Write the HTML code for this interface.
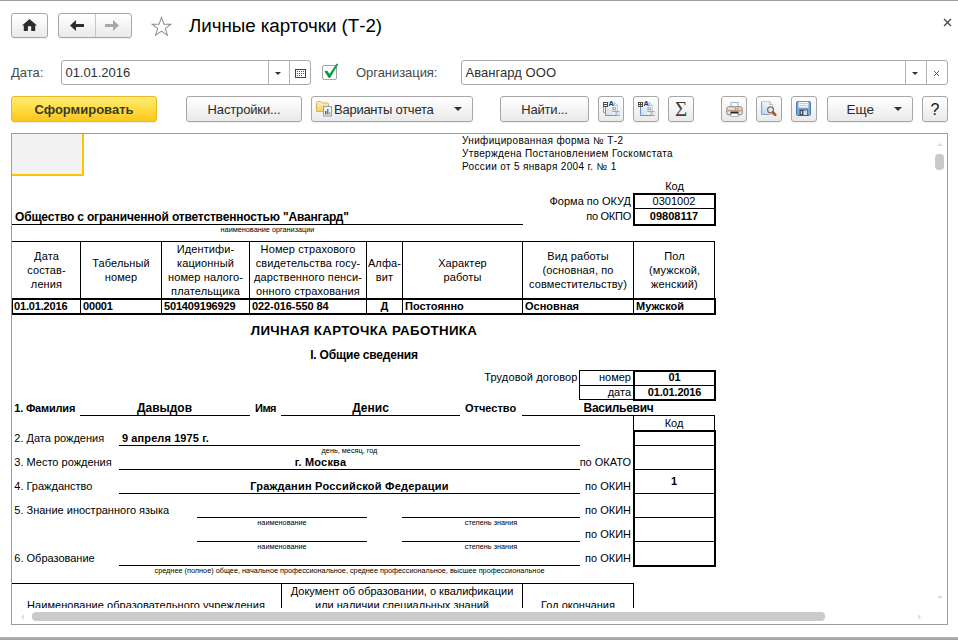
<!DOCTYPE html>
<html lang="ru">
<head>
<meta charset="utf-8">
<title>Личные карточки (Т-2)</title>
<style>
*{box-sizing:border-box;margin:0;padding:0}
html,body{width:958px;height:640px;overflow:hidden;background:#fff}
body{position:relative;font-family:"Liberation Sans",Arial,sans-serif;font-size:13px;color:#333}
.abs{position:absolute}
.topline{left:0;top:0;width:958px;height:1px;background:#9e9e9e}
.botbar{left:0;top:637px;width:958px;height:3px;background:linear-gradient(#bcbcbc,#a8a8a8 50%,#a0a0a0)}
.btn{position:absolute;height:26px;top:96px;border:1px solid #a6a6a6;border-radius:3px;background:linear-gradient(#ffffff,#f6f6f6 45%,#e9e9e9);box-shadow:0 1px 0 rgba(0,0,0,.06);font-size:13px;color:#2a2a2a;line-height:26px;text-align:center;white-space:nowrap}
.btn.nav{top:13px;height:25px;line-height:23px}
.ybtn{background:linear-gradient(#ffec78,#ffdf45 45%,#fcc71c);border-color:#eeb51f;font-weight:bold;color:#3a3a26;line-height:26px}
.inp{position:absolute;top:60px;height:25px;border:1px solid #a9a9a9;border-radius:3px;background:#fff}
.inp .txt{position:absolute;left:4px;top:0;line-height:23px;font-size:13px;color:#303030;letter-spacing:-0.1px;white-space:nowrap}
.inp .sep{position:absolute;top:0;width:1px;height:23px;background:#b5b5b5}
.lbl{position:absolute;font-size:13px;line-height:15px;color:#484848;white-space:nowrap}
.tri{position:absolute;width:0;height:0;border-left:4px solid transparent;border-right:4px solid transparent;border-top:4px solid #333}
/* report */
#frame{position:absolute;left:11px;top:133px;width:937px;height:492px;border:1px solid #9d9d9d;background:#fff;overflow:hidden}
#docwrap{position:absolute;left:0;top:0;width:921px;height:474px;overflow:hidden}
#doc{position:absolute;left:-12px;top:-134px;width:958px;height:640px;font-size:11px;color:#000}
#doc div{position:absolute;white-space:nowrap}
.h{height:1px;background:#000}
.v{width:1px;background:#000}
.t{line-height:13px}
.b{font-weight:bold}
.c{text-align:center}
.r{text-align:right}
.tiny{font-size:7.3px;line-height:9px;color:#000}
</style>
</head>
<body>
<div class="abs topline"></div>

<!-- navigation -->
<div class="btn nav" style="left:11px;width:37px"><svg width="15" height="12" viewBox="0 0 15 12" style="position:absolute;left:10px;top:5px"><path d="M7.5 0 L15 6.6 H13.2 V12 H9.2 V7.2 H5.9 V12 H1.8 V6.6 H0 Z" fill="#2e2e2e"/></svg></div>
<div class="btn nav" style="left:58px;width:74px"><div class="abs" style="left:36px;top:0;width:1px;height:23px;background:#c6c6c6"></div>
<svg width="14" height="11" viewBox="0 0 14 11" style="position:absolute;left:11px;top:6px"><path d="M6 0 L0 5.5 L6 11 V7 H14 V4 H6 Z" fill="#2e2e2e"/></svg>
<svg width="14" height="11" viewBox="0 0 14 11" style="position:absolute;left:46px;top:6px"><path d="M8 0 L14 5.5 L8 11 V7 H0 V4 H8 Z" fill="#a8a8a8"/></svg></div>
<svg class="abs" style="left:150px;top:16px" width="23" height="21" viewBox="0 0 24 23"><path d="M12 1.5 L14.7 9 H22.3 L16.2 13.6 L18.5 21.2 L12 16.6 L5.5 21.2 L7.8 13.6 L1.7 9 H9.3 Z" fill="#fff" stroke="#8c8c8c" stroke-width="1.1" stroke-linejoin="miter"/></svg>
<div class="abs" style="left:189px;top:14px;font-size:18.8px;line-height:24px;color:#000;white-space:nowrap;letter-spacing:-0.05px">Личные карточки (Т-2)</div>
<svg class="abs" style="left:943px;top:18px" width="9" height="9" viewBox="0 0 9 9"><path d="M1 1 L8 8 M8 1 L1 8" stroke="#444" stroke-width="1.3"/></svg>

<!-- fields row -->
<div class="lbl" style="left:11px;top:65px">Дата:</div>
<div class="inp" style="left:61px;width:250px"><div class="txt" style="left:3.5px;letter-spacing:-0.05px">01.01.2016</div><div class="sep" style="left:206px"></div><div class="sep" style="left:227px"></div>
<div class="tri" style="left:213px;top:11px;border-left-width:3.5px;border-right-width:3.5px;border-top-width:3.5px"></div>
<svg width="11" height="9" viewBox="0 0 11 9" style="position:absolute;left:233px;top:8px"><rect x="0.5" y="0.5" width="10" height="8" fill="#fff" stroke="#444"/><path d="M2 2.5h1M4 2.5h1M6 2.5h1M8 2.5h1M2 4.5h1M4 4.5h1M6 4.5h1M8 4.5h1M2 6.5h1M4 6.5h1M6 6.5h1" stroke="#555" stroke-width="1"/></svg></div>
<div class="abs" style="left:322px;top:65px;width:15px;height:15px;border:1px solid #a5a5a5;border-radius:2px;background:#fff"></div>
<svg class="abs" style="left:323px;top:62px" width="17" height="17" viewBox="0 0 17 17"><path d="M1.5 9.5 L4 8.5 L6.6 12 L13.6 1.5 L15.2 2.2 L7 16 L5.8 16 Z" fill="#0a9a3c"/></svg>
<div class="lbl" style="left:356px;top:65px;letter-spacing:-0.05px">Организация:</div>
<div class="inp" style="left:461px;width:487px"><div class="txt" style="left:3.5px;letter-spacing:0.05px">Авангард ООО</div><div class="sep" style="left:443px"></div><div class="sep" style="left:464px"></div>
<div class="tri" style="left:450px;top:11px;border-left-width:3.5px;border-right-width:3.5px;border-top-width:3.5px"></div>
<svg width="7" height="7" viewBox="0 0 7 7" style="position:absolute;left:471px;top:9px"><path d="M1 1 L6 6 M6 1 L1 6" stroke="#555" stroke-width="1"/></svg></div>

<!-- command bar -->
<div class="btn ybtn" style="left:11px;width:146px">Сформировать</div>
<div class="btn" style="left:186px;width:116px;letter-spacing:-0.15px">Настройки...</div>
<div class="btn" style="left:311px;width:162px"><span class="abs" style="left:22px;top:0;letter-spacing:-0.25px">Варианты отчета</span><div class="tri" style="left:142px;top:10px"></div>
<svg width="17" height="17" viewBox="0 0 17 17" style="position:absolute;left:4px;top:3px"><defs><linearGradient id="gfold" x1="0" y1="0" x2="0" y2="1"><stop offset="0" stop-color="#fdf4c4"/><stop offset="1" stop-color="#f0cf62"/></linearGradient></defs><path d="M0.5 2.5 Q0.5 1.5 1.5 1.5 H5 L6.5 3 H11.5 Q12.5 3 12.5 4 V11.5 H0.5 Z" fill="url(#gfold)" stroke="#d4b45a"/><rect x="7.5" y="6.5" width="8" height="9.5" fill="#eef3fa" stroke="#8aa0bd"/><rect x="9" y="11" width="1.5" height="3.5" fill="#d23b2e"/><rect x="11" y="9" width="1.5" height="5.5" fill="#3aa655"/><rect x="13" y="12" width="1.2" height="2.5" fill="#e09a28"/></svg></div>
<div class="btn" style="left:500px;width:89px;letter-spacing:-0.2px">Найти...</div>
<div class="btn" style="left:598px;width:26px"><svg width="20" height="19" viewBox="0 0 20 19" style="position:absolute;left:3px;top:2px"><defs><linearGradient id="ga1" x1="1" y1="0" x2="0" y2="1"><stop offset="0" stop-color="#ffffff"/><stop offset="0.45" stop-color="#eef3fa"/><stop offset="1" stop-color="#c9dbf0"/></linearGradient></defs><path d="M3.5 3.5 H12.5 L15.5 6.5 V16.5 H3.5 Z" fill="url(#ga1)" stroke="#c3d3e8" stroke-width="1"/><path d="M3.5 4 V16.5 H14" fill="none" stroke="#6f93c4" stroke-width="1"/><path d="M12.5 3.5 V6.5 H15.5" fill="none" stroke="#a9bfdc" stroke-width="1"/><rect x="1.5" y="3.5" width="4" height="4" fill="#fff" stroke="#4d4d4d"/><path d="M1.5 5.5 H5.5" stroke="#4d4d4d"/><path d="M1.5 8 V13.5 H3" fill="none" stroke="#9a9a9a"/><text x="6.6" y="7" font-family="Liberation Sans, sans-serif" font-size="7.5" font-weight="bold" fill="#17396b">A</text><text x="10" y="12.6" font-family="Liberation Sans, sans-serif" font-size="7" fill="#858585">B</text><text x="13.2" y="17.4" font-family="Liberation Sans, sans-serif" font-size="7" fill="#858585">C</text></svg></div>
<div class="btn" style="left:633px;width:26px"><svg width="20" height="19" viewBox="0 0 20 19" style="position:absolute;left:3px;top:2px"><defs><linearGradient id="ga2" x1="1" y1="0" x2="0" y2="1"><stop offset="0" stop-color="#ffffff"/><stop offset="0.45" stop-color="#eef3fa"/><stop offset="1" stop-color="#c9dbf0"/></linearGradient></defs><path d="M3.5 3.5 H12.5 L15.5 6.5 V16.5 H3.5 Z" fill="url(#ga2)" stroke="#c3d3e8" stroke-width="1"/><path d="M3.5 4 V16.5 H14" fill="none" stroke="#6f93c4" stroke-width="1"/><path d="M12.5 3.5 V6.5 H15.5" fill="none" stroke="#a9bfdc" stroke-width="1"/><rect x="1.5" y="3.5" width="4" height="4" fill="#fff" stroke="#4d4d4d"/><path d="M1.5 5.5 H5.5 M3.5 3.5 V7.5" stroke="#4d4d4d"/><text x="6.6" y="7" font-family="Liberation Sans, sans-serif" font-size="7.5" font-weight="bold" fill="#17396b">A</text><text x="10" y="12.6" font-family="Liberation Sans, sans-serif" font-size="7" fill="#858585">B</text><text x="13.2" y="17.4" font-family="Liberation Sans, sans-serif" font-size="7" fill="#858585">C</text></svg></div>
<div class="btn" style="left:668px;width:26px;font-family:'Liberation Serif',serif;font-size:21px;line-height:24px;color:#3f3f3f">Σ</div>
<div class="btn" style="left:721px;width:26px"><svg width="17" height="16" viewBox="0 0 17 16" style="position:absolute;left:4px;top:4px"><rect x="5" y="1.5" width="7" height="5.5" fill="#f7fafd" stroke="#9fb3cc"/><rect x="0.8" y="5.8" width="15.4" height="8" rx="2" fill="#ece6e0" stroke="#8d7766"/><rect x="1.5" y="8.8" width="14" height="1.6" fill="#b99c86"/><rect x="4.5" y="10.6" width="8" height="2.6" fill="#262626"/><rect x="5" y="12.4" width="7" height="3" fill="#fff" stroke="#8a8a8a" stroke-width="0.6"/><rect x="9" y="7.2" width="1.4" height="1.3" fill="#e0392b"/><rect x="11.3" y="7.2" width="1.4" height="1.3" fill="#3ea84a"/></svg></div>
<div class="btn" style="left:756px;width:26px"><svg width="18" height="18" viewBox="0 0 18 18" style="position:absolute;left:3px;top:3px"><defs><linearGradient id="gp" x1="1" y1="0" x2="0" y2="1"><stop offset="0" stop-color="#ffffff"/><stop offset="0.5" stop-color="#e4edf8"/><stop offset="1" stop-color="#b5cde9"/></linearGradient></defs><path d="M1.5 1.5 H9.5 L12.5 4.5 V14.5 H1.5 Z" fill="url(#gp)" stroke="#bfd0e6"/><path d="M1.5 2 V14.5 H9" fill="none" stroke="#7fa3d2"/><path d="M9.5 1.5 V4.5 H12.5" fill="none" stroke="#a9bfdc"/><circle cx="10.5" cy="9.8" r="3" fill="#dcebf9" stroke="#a2683a" stroke-width="1.3"/><path d="M13 12.3 L15.3 14.8" stroke="#9a5a26" stroke-width="2.6" stroke-linecap="round"/></svg></div>
<div class="btn" style="left:791px;width:26px"><svg width="15" height="15" viewBox="0 0 15 15" style="position:absolute;left:4px;top:4px"><rect x="0.5" y="0.5" width="14" height="14" rx="1.2" fill="#7aa6d3" stroke="#4c7aab"/><rect x="2.6" y="0.8" width="9.8" height="5.8" fill="#f3f8fd"/><path d="M3.5 2.5 h8 M3.5 4.5 h8" stroke="#b5d0ea" stroke-width="1"/><rect x="3.6" y="8.6" width="8" height="6" fill="#3c4d60"/><rect x="7.4" y="9.4" width="3.6" height="4.6" fill="#d9dee4"/><rect x="4.8" y="10" width="1.2" height="3" fill="#cfd6de"/></svg></div>
<div class="btn" style="left:827px;width:86px"><span class="abs" style="left:18.5px;top:0;font-size:13.5px">Еще</span><div class="tri" style="left:66px;top:10px"></div></div>
<div class="btn" style="left:922px;width:26px;font-size:16px;color:#111;line-height:26px">?</div>

<!-- report frame -->
<div id="frame">
<div id="docwrap">
<div id="doc">
<div style="left:12px;top:134px;width:72px;height:42px;background:#f2f2f2;border-right:2px solid #fdc300;border-bottom:2px solid #fdc300"></div>
<div class="" style="left:462px;top:134.53px;font-size:10px;line-height:12px;letter-spacing:0.35px;">Унифицированная форма № Т-2</div>
<div class="" style="left:462px;top:147.53px;font-size:10px;line-height:12px;letter-spacing:0.35px;">Утверждена Постановлением Госкомстата</div>
<div class="" style="left:462px;top:160.53px;font-size:10px;line-height:12px;letter-spacing:0.35px;">России от 5 января 2004 г. № 1</div>
<div class="" style="left:634px;top:180.19px;font-size:11px;line-height:13px;width:81px;text-align:center;">Код</div>
<div class="" style="left:331px;top:194.69px;font-size:11px;line-height:13px;width:300px;text-align:right;">Форма по ОКУД</div>
<div class="" style="left:331px;top:209.69px;font-size:11px;line-height:13px;width:300px;text-align:right;letter-spacing:-0.25px;">по ОКПО</div>
<div class="h" style="left:633px;top:193px;width:83px;height:2px"></div>
<div class="h" style="left:633px;top:224px;width:83px;height:2px"></div>
<div class="v" style="left:633px;top:193px;height:33px;width:2px"></div>
<div class="v" style="left:714px;top:193px;height:33px;width:2px"></div>
<div class="h" style="left:633px;top:208px;width:83px;height:1px"></div>
<div class="" style="left:633px;top:194.69px;font-size:11px;line-height:13px;width:82px;text-align:center;">0301002</div>
<div class="b" style="left:633px;top:209.69px;font-size:11px;line-height:13px;width:82px;text-align:center;">09808117</div>
<div class="b" style="left:15px;top:209.84px;font-size:12px;line-height:14px;letter-spacing:-0.17px;">Общество с ограниченной ответственностью "Авангард"</div>
<div class="h" style="left:12px;top:224px;width:511px;height:1px"></div>
<div class="tiny" style="left:12px;top:224.82px;font-size:7.3px;line-height:9.3px;width:511px;text-align:center;">наименование организации</div>
<div class="h" style="left:12px;top:241px;width:703px;height:1px"></div>
<div class="v" style="left:80px;top:241px;height:74px;width:1px"></div>
<div class="v" style="left:161px;top:241px;height:74px;width:1px"></div>
<div class="v" style="left:249px;top:241px;height:74px;width:1px"></div>
<div class="v" style="left:366px;top:241px;height:74px;width:1px"></div>
<div class="v" style="left:402px;top:241px;height:74px;width:1px"></div>
<div class="v" style="left:522px;top:241px;height:74px;width:1px"></div>
<div class="v" style="left:633px;top:241px;height:74px;width:1px"></div>
<div class="v" style="left:714px;top:241px;height:74px;width:1px"></div>
<div class="h" style="left:12px;top:298px;width:704px;height:2px"></div>
<div class="h" style="left:12px;top:313px;width:704px;height:2px"></div>
<div class="v" style="left:12px;top:298px;height:17px;width:1px"></div>
<div class="v" style="left:714px;top:298px;height:17px;width:2px"></div>
<div class="" style="left:13px;top:250.19px;font-size:11px;line-height:13px;width:67px;text-align:center;letter-spacing:0.12px;">Дата</div>
<div class="" style="left:13px;top:264.19px;font-size:11px;line-height:13px;width:67px;text-align:center;letter-spacing:0.12px;">состав-</div>
<div class="" style="left:13px;top:278.19px;font-size:11px;line-height:13px;width:67px;text-align:center;letter-spacing:0.12px;">ления</div>
<div class="" style="left:81px;top:257.19px;font-size:11px;line-height:13px;width:80px;text-align:center;letter-spacing:0.12px;">Табельный</div>
<div class="" style="left:81px;top:271.19px;font-size:11px;line-height:13px;width:80px;text-align:center;letter-spacing:0.12px;">номер</div>
<div class="" style="left:162px;top:243.19px;font-size:11px;line-height:13px;width:87px;text-align:center;letter-spacing:0.12px;">Идентифи-</div>
<div class="" style="left:162px;top:257.19px;font-size:11px;line-height:13px;width:87px;text-align:center;letter-spacing:0.12px;">кационный</div>
<div class="" style="left:162px;top:271.19px;font-size:11px;line-height:13px;width:87px;text-align:center;letter-spacing:0.12px;">номер налого-</div>
<div class="" style="left:162px;top:285.19px;font-size:11px;line-height:13px;width:87px;text-align:center;letter-spacing:0.12px;">плательщика</div>
<div class="" style="left:250px;top:243.19px;font-size:11px;line-height:13px;width:116px;text-align:center;letter-spacing:0.12px;">Номер страхового</div>
<div class="" style="left:250px;top:257.19px;font-size:11px;line-height:13px;width:116px;text-align:center;letter-spacing:0.12px;">свидетельства госу-</div>
<div class="" style="left:250px;top:271.19px;font-size:11px;line-height:13px;width:116px;text-align:center;letter-spacing:0.12px;">дарственного пенси-</div>
<div class="" style="left:250px;top:285.19px;font-size:11px;line-height:13px;width:116px;text-align:center;letter-spacing:0.12px;">онного страхования</div>
<div class="" style="left:367px;top:257.19px;font-size:11px;line-height:13px;width:35px;text-align:center;letter-spacing:0.12px;">Алфа-</div>
<div class="" style="left:367px;top:271.19px;font-size:11px;line-height:13px;width:35px;text-align:center;letter-spacing:0.12px;">вит</div>
<div class="" style="left:403px;top:257.19px;font-size:11px;line-height:13px;width:119px;text-align:center;letter-spacing:0.12px;">Характер</div>
<div class="" style="left:403px;top:271.19px;font-size:11px;line-height:13px;width:119px;text-align:center;letter-spacing:0.12px;">работы</div>
<div class="" style="left:523px;top:250.19px;font-size:11px;line-height:13px;width:110px;text-align:center;letter-spacing:0.12px;">Вид работы</div>
<div class="" style="left:523px;top:264.19px;font-size:11px;line-height:13px;width:110px;text-align:center;letter-spacing:0.12px;">(основная, по</div>
<div class="" style="left:523px;top:278.19px;font-size:11px;line-height:13px;width:110px;text-align:center;letter-spacing:0.12px;">совместительству)</div>
<div class="" style="left:634px;top:250.19px;font-size:11px;line-height:13px;width:81px;text-align:center;letter-spacing:0.12px;">Пол</div>
<div class="" style="left:634px;top:264.19px;font-size:11px;line-height:13px;width:81px;text-align:center;letter-spacing:0.12px;">(мужской,</div>
<div class="" style="left:634px;top:278.19px;font-size:11px;line-height:13px;width:81px;text-align:center;letter-spacing:0.12px;">женский)</div>
<div class="b" style="left:14px;top:299.69px;font-size:11px;line-height:13px;letter-spacing:-0.17px;">01.01.2016</div>
<div class="b" style="left:83px;top:299.69px;font-size:11px;line-height:13px;letter-spacing:-0.17px;">00001</div>
<div class="b" style="left:164px;top:299.69px;font-size:11px;line-height:13px;letter-spacing:-0.17px;">501409196929</div>
<div class="b" style="left:252px;top:299.69px;font-size:11px;line-height:13px;letter-spacing:-0.08px;">022-016-550 84</div>
<div class="b" style="left:405px;top:299.69px;font-size:11px;line-height:13px;">Постоянно</div>
<div class="b" style="left:525px;top:299.69px;font-size:11px;line-height:13px;">Основная</div>
<div class="b" style="left:636px;top:299.69px;font-size:11px;line-height:13px;">Мужской</div>
<div class="b" style="left:367px;top:299.69px;font-size:11px;line-height:13px;width:35px;text-align:center;">Д</div>
<div class="b" style="left:12px;top:322.74px;font-size:13.3px;line-height:15.3px;width:704px;text-align:center;letter-spacing:0.33px;">ЛИЧНАЯ КАРТОЧКА РАБОТНИКА</div>
<div class="b" style="left:12px;top:347.84px;font-size:12px;line-height:14px;width:704px;text-align:center;letter-spacing:-0.18px;">I. Общие сведения</div>
<div class="" style="left:277.5px;top:370.69px;font-size:11px;line-height:13px;width:300px;text-align:right;letter-spacing:0.13px;">Трудовой договор</div>
<div class="h" style="left:579px;top:370px;width:55px;height:1px"></div>
<div class="h" style="left:579px;top:385px;width:55px;height:1px"></div>
<div class="h" style="left:579px;top:399px;width:55px;height:1px"></div>
<div class="v" style="left:579px;top:370px;height:30px;width:1px"></div>
<div class="h" style="left:633px;top:370px;width:83px;height:2px"></div>
<div class="h" style="left:633px;top:399px;width:83px;height:2px"></div>
<div class="v" style="left:633px;top:370px;height:31px;width:2px"></div>
<div class="v" style="left:714px;top:370px;height:31px;width:2px"></div>
<div class="h" style="left:633px;top:385px;width:83px;height:1px"></div>
<div class="" style="left:331px;top:370.69px;font-size:11px;line-height:13px;width:300px;text-align:right;">номер</div>
<div class="" style="left:331px;top:385.69px;font-size:11px;line-height:13px;width:300px;text-align:right;">дата</div>
<div class="b" style="left:634px;top:370.69px;font-size:11px;line-height:13px;width:81px;text-align:center;">01</div>
<div class="b" style="left:634px;top:385.69px;font-size:11px;line-height:13px;width:81px;text-align:center;letter-spacing:-0.15px;">01.01.2016</div>
<div class="b" style="left:14.3px;top:401.69px;font-size:11px;line-height:13px;letter-spacing:-0.2px;">1. Фамилия</div>
<div class="h" style="left:80px;top:415px;width:170px;height:1px"></div>
<div class="b" style="left:80px;top:400.84px;font-size:12px;line-height:14px;width:169px;text-align:center;">Давыдов</div>
<div class="b" style="left:255px;top:401.69px;font-size:11px;line-height:13px;letter-spacing:-0.5px;">Имя</div>
<div class="h" style="left:281px;top:415px;width:179px;height:1px"></div>
<div class="b" style="left:281px;top:400.84px;font-size:12px;line-height:14px;width:179px;text-align:center;">Денис</div>
<div class="b" style="left:465px;top:401.69px;font-size:11px;line-height:13px;">Отчество</div>
<div class="h" style="left:522px;top:415px;width:193px;height:1px"></div>
<div class="b" style="left:522px;top:400.84px;font-size:12px;line-height:14px;width:193px;text-align:center;letter-spacing:-0.3px;">Васильевич</div>
<div class="v" style="left:633px;top:415px;height:16px;width:1px"></div>
<div class="v" style="left:714px;top:415px;height:16px;width:1px"></div>
<div class="" style="left:633px;top:416.69px;font-size:11px;line-height:13px;width:82px;text-align:center;">Код</div>
<div class="h" style="left:633px;top:430px;width:83px;height:2px"></div>
<div class="h" style="left:633px;top:565px;width:83px;height:2px"></div>
<div class="v" style="left:633px;top:430px;height:137px;width:2px"></div>
<div class="v" style="left:714px;top:430px;height:137px;width:2px"></div>
<div class="h" style="left:633px;top:445px;width:83px;height:1px"></div>
<div class="h" style="left:633px;top:469px;width:83px;height:1px"></div>
<div class="h" style="left:633px;top:493px;width:83px;height:1px"></div>
<div class="h" style="left:633px;top:517px;width:83px;height:1px"></div>
<div class="h" style="left:633px;top:541px;width:83px;height:1px"></div>
<div class="b" style="left:633px;top:474.69px;font-size:11px;line-height:13px;width:82px;text-align:center;">1</div>
<div class="" style="left:14.3px;top:431.69px;font-size:11px;line-height:13px;">2. Дата рождения</div>
<div class="h" style="left:119px;top:445px;width:461px;height:1px"></div>
<div class="b" style="left:122px;top:431.69px;font-size:11px;line-height:13px;letter-spacing:0.1px;">9 апреля 1975 г.</div>
<div class="tiny" style="left:119px;top:446.32px;font-size:7.3px;line-height:9.3px;width:461px;text-align:center;">день, месяц, год</div>
<div class="" style="left:14.3px;top:455.69px;font-size:11px;line-height:13px;">3. Место рождения</div>
<div class="h" style="left:119px;top:469px;width:461px;height:1px"></div>
<div class="b" style="left:119px;top:455.69px;font-size:11px;line-height:13px;width:403px;text-align:center;letter-spacing:0.2px;">г. Москва</div>
<div class="" style="left:331px;top:455.69px;font-size:11px;line-height:13px;width:300px;text-align:right;">по ОКАТО</div>
<div class="" style="left:14.3px;top:479.69px;font-size:11px;line-height:13px;">4. Гражданство</div>
<div class="h" style="left:119px;top:493px;width:461px;height:1px"></div>
<div class="b" style="left:119px;top:479.69px;font-size:11px;line-height:13px;width:461px;text-align:center;letter-spacing:0.23px;">Гражданин Российской Федерации</div>
<div class="" style="left:331px;top:479.69px;font-size:11px;line-height:13px;width:300px;text-align:right;">по ОКИН</div>
<div class="" style="left:14.3px;top:503.69px;font-size:11px;line-height:13px;">5. Знание иностранного языка</div>
<div class="h" style="left:197px;top:517px;width:170px;height:1px"></div>
<div class="h" style="left:402px;top:517px;width:178px;height:1px"></div>
<div class="tiny" style="left:197px;top:518.02px;font-size:7.3px;line-height:9.3px;width:170px;text-align:center;">наименование</div>
<div class="tiny" style="left:402px;top:518.02px;font-size:7.3px;line-height:9.3px;width:178px;text-align:center;">степень знания</div>
<div class="" style="left:331px;top:503.69px;font-size:11px;line-height:13px;width:300px;text-align:right;">по ОКИН</div>
<div class="h" style="left:197px;top:541px;width:170px;height:1px"></div>
<div class="h" style="left:402px;top:541px;width:178px;height:1px"></div>
<div class="tiny" style="left:197px;top:541.82px;font-size:7.3px;line-height:9.3px;width:170px;text-align:center;">наименование</div>
<div class="tiny" style="left:402px;top:541.82px;font-size:7.3px;line-height:9.3px;width:178px;text-align:center;">степень знания</div>
<div class="" style="left:331px;top:527.69px;font-size:11px;line-height:13px;width:300px;text-align:right;">по ОКИН</div>
<div class="" style="left:14.3px;top:551.69px;font-size:11px;line-height:13px;">6. Образование</div>
<div class="h" style="left:119px;top:565px;width:461px;height:1px"></div>
<div class="" style="left:331px;top:551.69px;font-size:11px;line-height:13px;width:300px;text-align:right;">по ОКИН</div>
<div class="tiny" style="left:119px;top:566.32px;font-size:7.3px;line-height:9.3px;width:461px;text-align:center;">среднее (полное) общее, начальное профессиональное, среднее профессиональное, высшее профессиональное</div>
<div class="h" style="left:12px;top:583px;width:622px;height:1px"></div>
<div class="v" style="left:281px;top:583px;height:57px;width:1px"></div>
<div class="v" style="left:522px;top:583px;height:57px;width:1px"></div>
<div class="v" style="left:633px;top:583px;height:57px;width:1px"></div>
<div class="" style="left:11px;top:598.69px;font-size:11px;line-height:13px;width:270px;text-align:center;letter-spacing:0.05px;">Наименование образовательного учреждения</div>
<div class="" style="left:282px;top:584.69px;font-size:11px;line-height:13px;width:240px;text-align:center;">Документ об образовании, о квалификации</div>
<div class="" style="left:282px;top:598.69px;font-size:11px;line-height:13px;width:240px;text-align:center;">или наличии специальных знаний</div>
<div class="" style="left:523px;top:598.69px;font-size:11px;line-height:13px;width:110px;text-align:center;">Год окончания</div>
</div>
</div>
<!-- scrollbars -->
<div class="abs" style="left:923px;top:20px;width:9px;height:16px;border-radius:4px;background:#c9c9c9"></div>
<div class="abs" style="left:925px;top:9px;width:0;height:0;border-left:3px solid transparent;border-right:3px solid transparent;border-bottom:3px solid #dcdcdc"></div>
<div class="abs" style="left:925px;top:462px;width:0;height:0;border-left:3px solid transparent;border-right:3px solid transparent;border-top:3px solid #dcdcdc"></div>
<div class="abs" style="left:0;top:474px;width:935px;height:16px;background:#fff"></div>
<div class="abs" style="left:20px;top:478px;width:793px;height:9px;border-radius:4px;background:#cbcbcb"></div>
<div class="abs" style="left:9px;top:480px;width:0;height:0;border-top:3px solid transparent;border-bottom:3px solid transparent;border-right:3px solid #e0e0e0"></div>
<div class="abs" style="left:906px;top:480px;width:0;height:0;border-top:3px solid transparent;border-bottom:3px solid transparent;border-left:3px solid #e0e0e0"></div>
</div>

<div class="abs botbar"></div>
</body>
</html>
